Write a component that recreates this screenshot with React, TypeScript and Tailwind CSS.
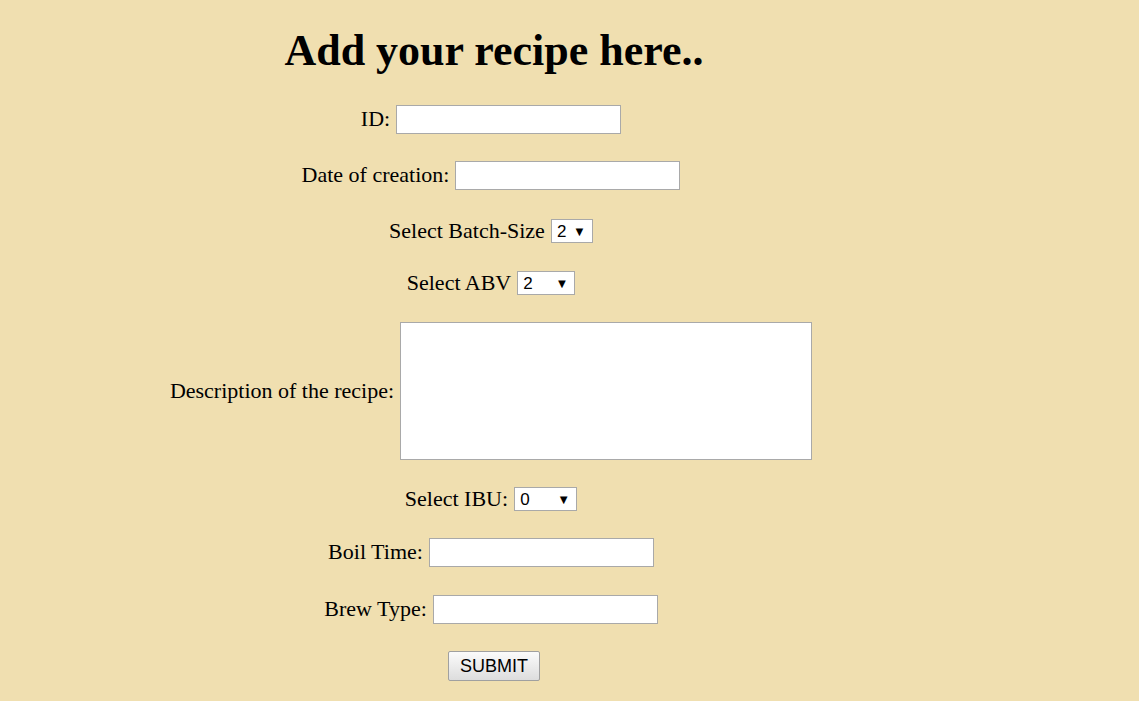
import * as React from 'react';

function Field({ label, className = '' }: { label: string; className?: string }) {
  return (
    <div className={`flex items-center justify-center gap-[6px] h-[30px] ${className}`}>
      <span className="pb-[2px]">{label}</span>
      <input type="text" className="w-[225px] h-[29px] bg-white border border-[#a9a9a9] outline-none" />
    </div>
  );
}

function Dropdown({ label, value, width, className = '' }: { label: string; value: string; width: string; className?: string }) {
  return (
    <div className={`flex items-center justify-center gap-[6px] h-[30px] ${className}`}>
      <span className="pb-[2px]">{label}</span>
      <div
        className={`${width} h-[24px] bg-white border border-[#a9a9a9] flex items-center justify-between pl-[5px] pr-[6px] text-[17px] leading-none text-black`}
        style={{ fontFamily: '"Liberation Sans", Arial, sans-serif' }}
      >
        <span>{value}</span>
        <span className="text-[13px]">▼</span>
      </div>
    </div>
  );
}

export default function App() {
  return (
    <div
      className="min-h-[701px] w-full bg-[#f0dfb0] text-black text-[22px]"
      style={{ fontFamily: '"Liberation Serif", "Times New Roman", serif' }}
    >
      <div className="w-[988px] flex flex-col">
        <h1 className="text-[44px] font-bold text-center leading-none pt-[29px] h-[81px]">Add your recipe here..</h1>

        <div className="pr-[6px] flex flex-col">
          <Field label="ID:" className="mt-[23px]" />
          <Field label="Date of creation:" className="mt-[26px]" />
          <Dropdown label="Select Batch-Size" value="2" width="w-[42px]" className="mt-[26px]" />
          <Dropdown label="Select ABV" value="2" width="w-[58px]" className="mt-[22px]" />

          <div className="flex items-center justify-center gap-[6px] mt-[24px]">
            <span className="pb-[2px]">Description of the recipe:</span>
            <textarea className="w-[412px] h-[138px] bg-white border border-[#a9a9a9] outline-none resize-none" />
          </div>

          <Dropdown label="Select IBU:" value="0" width="w-[63px]" className="mt-[24px]" />
          <Field label="Boil Time:" className="mt-[23px]" />
          <Field label="Brew Type:" className="mt-[27px]" />
        </div>

        <div className="flex justify-center mt-[27px]">
          <button
            type="submit"
            className="w-[92px] h-[30px] rounded-[2px] border border-[#a0a0a0] bg-gradient-to-b from-[#fbfbfb] to-[#dddddd] text-[18px] leading-none text-black"
            style={{ fontFamily: '"Liberation Sans", Arial, sans-serif' }}
          >
            SUBMIT
          </button>
        </div>
      </div>
    </div>
  );
}
